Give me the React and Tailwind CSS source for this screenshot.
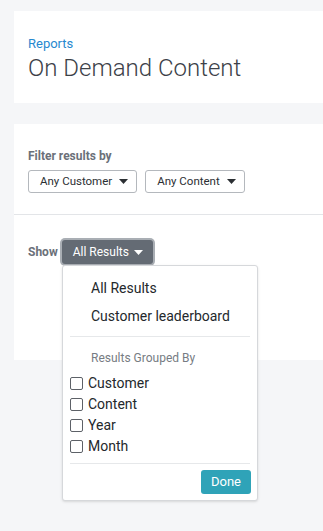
import { useState } from "react";

function Caret({ className = "" }) {
  return (
    <svg width="9" height="5" viewBox="0 0 9 5" className={className}>
      <path d="M0 0h9L4.5 5z" fill="currentColor" />
    </svg>
  );
}

function FilterButton({ label }) {
  return (
    <button className="h-[23px] pl-[11px] pr-[8px] flex items-center gap-[7px] border border-[#b4b8bd] rounded-[3px] bg-white text-[11.5px] text-[#2b2f33]">
      {label}
      <Caret className="text-[#2b2f33]" />
    </button>
  );
}

function Check({ label }) {
  return (
    <label className="flex items-center gap-[5px] h-[21px] text-[14px] text-[#24282c]">
      <span className="w-[13px] h-[13px] border border-[#5d6167] rounded-[2px] bg-white" />
      {label}
    </label>
  );
}

export default function App() {
  const [open] = useState(true);

  return (
    <div
      className="min-h-[531px] bg-[#f5f6f8] pt-[11px] pl-[14px]"
      style={{ fontFamily: "Roboto, 'Liberation Sans', sans-serif" }}
    >
      <div className="bg-white h-[92px] pl-[14px] pt-[24px]">
        <div className="text-[13px] leading-[17px] text-[#2789cf]">Reports</div>
        <h1 className="mt-[2px] text-[24px] leading-[28px] font-light text-[#3c4148]">On Demand Content</h1>
      </div>

      <div className="mt-[21px] bg-white h-[236px]">
        <div className="px-[14px] pt-[24px] h-[91px] border-b border-[#e3e5e8]">
          <div className="text-[12px] leading-[16px] font-bold text-[#6b7079]">Filter results by</div>
          <div className="mt-[6px] flex gap-[8px]">
            <FilterButton label="Any Customer" />
            <FilterButton label="Any Content" />
          </div>
        </div>

        <div className="px-[14px] pt-[25px] flex items-center gap-[4px] relative">
          <span className="text-[12px] font-bold text-[#6b7079]">Show</span>
          <button className="h-[24px] pl-[11px] pr-[10px] flex items-center gap-[5px] rounded-[3px] bg-[#646b74] text-white text-[12px] ring-2 ring-[#a9aeb4]">
            All Results
            <Caret />
          </button>

          {open && (
            <div className="absolute left-[48px] top-[50px] w-[196px] h-[236px] bg-white border border-[#d6d8db] rounded-[3px] shadow-sm z-10">
              <div className="pt-[12px] pb-[2px] pl-[28px] text-[14px] text-[#24282c]">
                <div className="h-[28px] leading-[20px]">All Results</div>
                <div className="h-[28px] leading-[20px]">Customer leaderboard</div>
              </div>
              <div className="mx-[7px] border-t border-[#e6e8ea]" />
              <div className="pl-[28px] pt-[13px] text-[12px] leading-[16px] text-[#777c83]">Results Grouped By</div>
              <div className="pl-[7px] pt-[7px]">
                <Check label="Customer" />
                <Check label="Content" />
                <Check label="Year" />
                <Check label="Month" />
              </div>
              <div className="mx-[7px] mt-[6px] border-t border-[#e6e8ea]" />
              <div className="flex justify-end pr-[6px] pt-[6px]">
                <button className="h-[24px] px-[10px] rounded-[3px] bg-[#2fa3b8] text-white text-[13px]">Done</button>
              </div>
            </div>
          )}
        </div>
      </div>
    </div>
  );
}
